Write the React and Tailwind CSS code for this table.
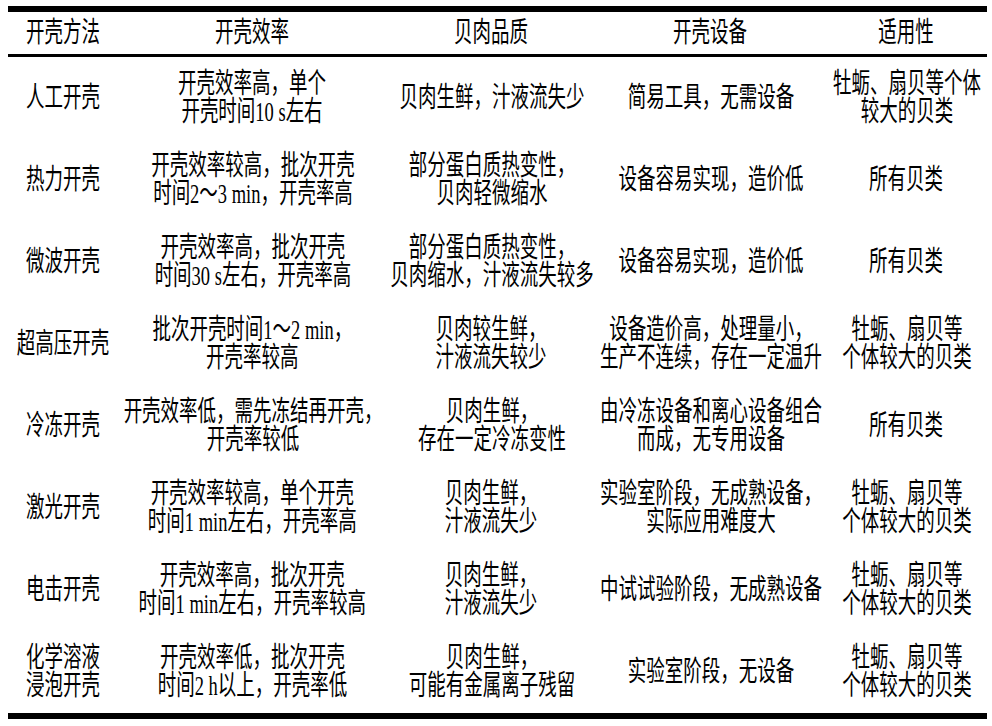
import React from 'react';

const columns = ['开壳方法', '开壳效率', '贝肉品质', '开壳设备', '适用性'];

const rows = [
  [['人工开壳'], ['开壳效率高，单个', '开壳时间10 s左右'], ['贝肉生鲜，汁液流失少'], ['简易工具，无需设备'], ['牡蛎、扇贝等个体', '较大的贝类']],
  [['热力开壳'], ['开壳效率较高，批次开壳', '时间2～3 min，开壳率高'], ['部分蛋白质热变性，', '贝肉轻微缩水'], ['设备容易实现，造价低'], ['所有贝类']],
  [['微波开壳'], ['开壳效率高，批次开壳', '时间30 s左右，开壳率高'], ['部分蛋白质热变性，', '贝肉缩水，汁液流失较多'], ['设备容易实现，造价低'], ['所有贝类']],
  [['超高压开壳'], ['批次开壳时间1～2 min，', '开壳率较高'], ['贝肉较生鲜，', '汁液流失较少'], ['设备造价高，处理量小，', '生产不连续，存在一定温升'], ['牡蛎、扇贝等', '个体较大的贝类']],
  [['冷冻开壳'], ['开壳效率低，需先冻结再开壳，', '开壳率较低'], ['贝肉生鲜，', '存在一定冷冻变性'], ['由冷冻设备和离心设备组合', '而成，无专用设备'], ['所有贝类']],
  [['激光开壳'], ['开壳效率较高，单个开壳', '时间1 min左右，开壳率高'], ['贝肉生鲜，', '汁液流失少'], ['实验室阶段，无成熟设备，', '实际应用难度大'], ['牡蛎、扇贝等', '个体较大的贝类']],
  [['电击开壳'], ['开壳效率高，批次开壳', '时间1 min左右，开壳率较高'], ['贝肉生鲜，', '汁液流失少'], ['中试试验阶段，无成熟设备'], ['牡蛎、扇贝等', '个体较大的贝类']],
  [['化学溶液', '浸泡开壳'], ['开壳效率低，批次开壳', '时间2 h以上，开壳率低'], ['贝肉生鲜，', '可能有金属离子残留'], ['实验室阶段，无设备'], ['牡蛎、扇贝等', '个体较大的贝类']],
];

function Cell({ lines, className = '' }) {
  return (
    <div className={`flex items-center justify-center overflow-visible ${className}`}>
      <div className="shrink-0 scale-x-[0.66] whitespace-nowrap text-center">
        {lines.map((line, i) => (
          <div key={i}>{line}</div>
        ))}
      </div>
    </div>
  );
}

export default function App() {
  return (
    <div className="w-[992px] h-[726px] bg-white pt-[6px] pl-[8px] font-['Liberation_Serif','Noto_Sans_CJK_SC',serif] text-[28px] leading-[28px] text-black">
      <div className="w-[979px] border-t-[6px] border-b-[6px] border-black">
        {/* Header */}
        <div className="grid grid-cols-[109px_271px_207px_231px_161px] h-[45px] border-b-[3px] border-black">
          {columns.map(c => (
            <Cell key={c} lines={[c]} className="h-[42px]" />
          ))}
        </div>

        {/* Body */}
        {rows.map((row, r) => (
          <div key={r} className="grid grid-cols-[109px_271px_207px_231px_161px] h-[82px]">
            {row.map((lines, i) => (
              <Cell key={i} lines={lines} className="h-[82px]" />
            ))}
          </div>
        ))}
      </div>
    </div>
  );
}
